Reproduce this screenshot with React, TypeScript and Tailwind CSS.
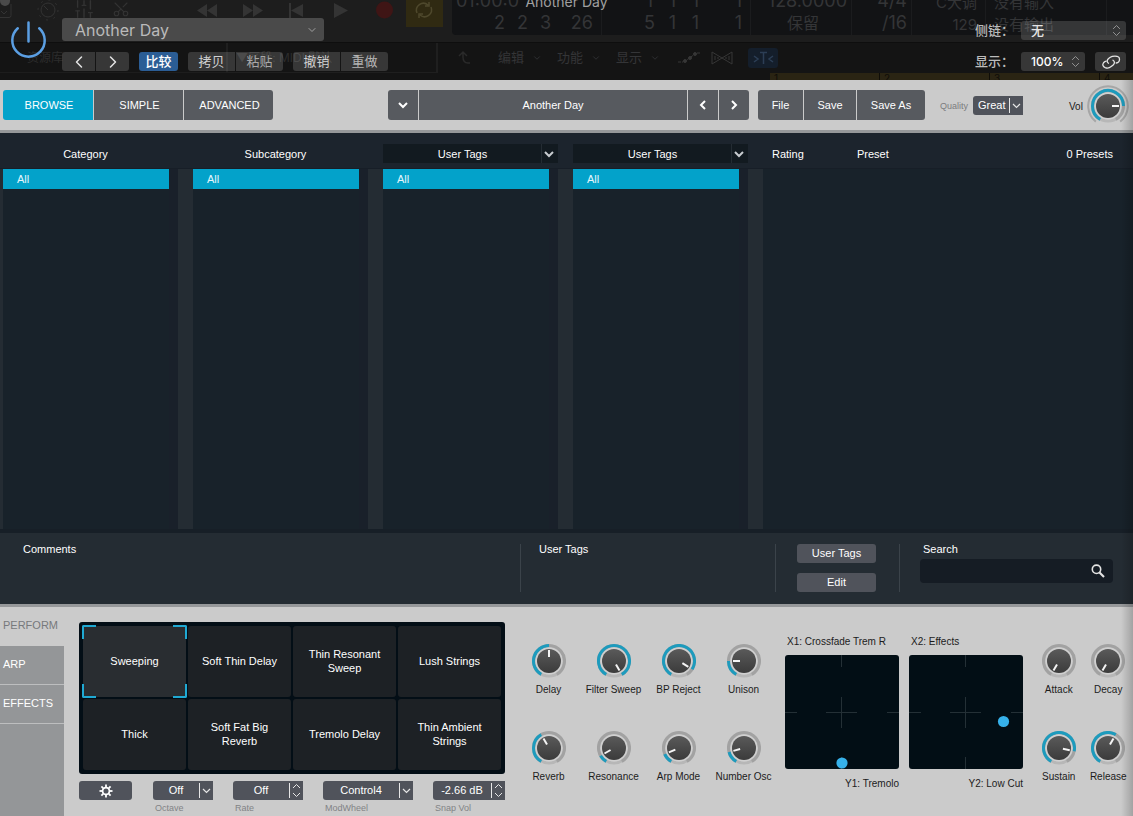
import { useId, useState } from "react";
import type { ReactNode } from "react";
import { ChevronDown, ChevronLeft, ChevronRight, ChevronsUpDown, Scissors, SlidersVertical } from "lucide-react";

type KnobProps = { label: string; angle: number };

const views = [
  { name: "BROWSE", width: "w-[90px]" },
  { name: "SIMPLE", width: "w-[89px]" },
  { name: "ADVANCED", width: "w-[89px]" },
];

const snapshots = [
  "Sweeping",
  "Soft Thin Delay",
  "Thin Resonant Sweep",
  "Lush Strings",
  "Thick",
  "Soft Fat Big Reverb",
  "Tremolo Delay",
  "Thin Ambient Strings",
];

const macroKnobs: KnobProps[] = [
  { label: "Delay", angle: 0 },
  { label: "Filter Sweep", angle: 150 },
  { label: "BP Reject", angle: 122 },
  { label: "Unison", angle: -90 },
  { label: "Reverb", angle: -30 },
  { label: "Resonance", angle: -120 },
  { label: "Arp Mode", angle: -113 },
  { label: "Number Osc", angle: -105 },
];

const envelopeKnobs: KnobProps[] = [
  { label: "Attack", angle: -150 },
  { label: "Decay", angle: -150 },
  { label: "Sustain", angle: 102 },
  { label: "Release", angle: 30 },
];

// 0 degrees points up, positive is clockwise
const point = (angle: number, r: number) => {
  const a = ((angle - 90) * Math.PI) / 180;
  return [r * Math.cos(a), r * Math.sin(a)];
};

const arc = (from: number, to: number, r: number) => {
  const [x1, y1] = point(from, r);
  const [x2, y2] = point(to, r);
  return `M${x1} ${y1}A${r} ${r} 0 ${to - from > 180 ? 1 : 0} 1 ${x2} ${y2}`;
};

const Dial = ({ label, angle, large }: KnobProps & { large?: boolean }) => {
  const id = useId();
  const [x1, y1] = point(angle, 4);
  const [x2, y2] = point(angle, 11);
  return (
    <span className="relative block">
      <svg
        viewBox={large ? "-21 -21 42 42" : "-17 -17 34 34"}
        className={large ? "block size-[42px]" : "block size-[34px]"}
        fill="none"
      >
        <defs>
          <linearGradient id={id} x1="0" y1="0" x2="0" y2="1">
            <stop offset="0" stopColor="#5a5a5a" />
            <stop offset="1" stopColor="#3b3b3b" />
          </linearGradient>
        </defs>
        {large && <path d={arc(-142, 142, 19.8)} stroke="#a6a6a6" strokeWidth="2" />}
        <circle r="15" stroke="#b7b7b7" strokeWidth="3" />
        <path d={arc(-150, 150, 15.5)} stroke="#a2a2a2" strokeWidth="3" />
        {angle > -150 && <path d={arc(-150, angle, 15.5)} stroke="#1d9bbd" strokeWidth="3" />}
        <circle r="13.5" fill="#d0d0d0" />
        <circle r="12" fill={`url(#${id})`} />
        <path d={`M${x1} ${y1}L${x2} ${y2}`} stroke="#f4f4f4" strokeWidth="2" />
      </svg>
      <input
        type="range"
        aria-label={label}
        min={-150}
        max={150}
        defaultValue={angle}
        className="absolute inset-0 size-full cursor-pointer opacity-0"
      />
    </span>
  );
};

const Knob = ({ label, angle }: KnobProps) => (
  <div className="flex h-[87px] flex-col items-center gap-1">
    <Dial label={label} angle={angle} />
    <span className="text-[10px] leading-4 whitespace-nowrap text-[#1c1c1c]">{label}</span>
  </div>
);

const SmallSelect = ({ label, value, width, stepper }: { label: string; value: string; width: string; stepper?: boolean }) => (
  <label className={`flex flex-col ${width}`}>
    <span className="relative flex h-[19px] rounded-l-[3px] bg-[#50535b] text-white">
      <select className="w-full appearance-none pr-3.5 text-center text-[11px] outline-none">
        <option>{value}</option>
      </select>
      <FieldArrow stepper={stepper} />
    </span>
    <span className="pl-[2px] text-[9px] leading-4 text-[#828386]">{label}</span>
  </label>
);

const FieldArrow = ({ stepper }: { stepper?: boolean }) => (
  <svg
    viewBox="0 0 14 19"
    className="pointer-events-none absolute top-0 right-0 h-[19px] w-3.5"
    fill="none"
    stroke="#e6e6e6"
  >
    <path d="M.5 2v15" />
    {stepper ? <path d="M4 7l3.5-3.5L11 7M4 12l3.5 3.5L11 12" /> : <path d="M4 8l3.5 3.5L11 8" strokeWidth="1.2" />}
  </svg>
);

const XYPad = ({ x, y, cx, cy }: { x: string; y: string; cx: number; cy: number }) => (
  <div className="flex w-[114px] flex-col">
    <span className="pl-[2px] text-[10px] leading-4 whitespace-nowrap">{x}</span>
    <svg viewBox="0 0 114 114" className="mt-[5px] mb-[7px] size-[114px] rounded-[3px] bg-[#020e15]" role="img" aria-label={`${x}, ${y}`}>
      <path
        d="M56.5 0v12M56.5 42v31M56.5 102v12M0 57.5h12M41 57.5h31M102 57.5h12"
        stroke="#243036"
        fill="none"
      />
      <circle cx={cx} cy={cy} r="5.6" fill="#36b1ea" />
    </svg>
    <span className="text-right text-[10px] leading-4 whitespace-nowrap">{y}</span>
  </div>
);

const Readout = ({ top, bottom, width }: { top: string; bottom: string; width: string }) => (
  <div className={`flex shrink-0 flex-col border-r border-[#1b1c1e] text-right ${width}`}>
    <span>{top}</span>
    <span>{bottom}</span>
  </div>
);

const Digits = ({ values }: { values: string[] }) => (
  <div className="grid grid-cols-[23px_23px_23px_1fr] text-center">
    {values.map((v, i) => (
      <span key={i} className={i % 4 === 3 ? "text-right" : ""}>{v}</span>
    ))}
  </div>
);

/* Host window showing faintly through the plugin header */
const HostBackdrop = () => (
  <div aria-hidden="true" className="absolute inset-0 flex flex-col overflow-hidden bg-[#191919] text-[#343537]">
    <div className="flex h-[43px] shrink-0 items-start border-b border-[#0e0e0e] bg-[#1d1d1d]">
      <svg viewBox="0 0 452 43" className="h-[43px] w-[452px] shrink-0" fill="none" stroke="#333">
        <circle cx="5" cy="1" r="5" fill="#4a4a4a" stroke="none" />
        <path d="M0 17.5h9q2 0 2-2V4M1 11l3 3 3-3" />
        <circle cx="48" cy="10" r="7" />
        <circle cx="48" cy="10" r="10" strokeDasharray="2 5.85" />
        <path d="M48 10l-4-4" />
        <rect x="406" width="37" height="27" fill="#302a12" stroke="none" />
        <path d="M417 13a7 7 0 0 1 11-8m1-3v4h-4M431 7a7 7 0 0 1-11 8m-1 3v-4h4" stroke="#4e482c" strokeWidth="1.5" />
        <g fill="#343434" stroke="none">
          <path d="M207 4v13l-10-6.500zM217 4v13l-10-6.500zM243 4v13l10-6.500zM253 4v13l10-6.500zM303 4v13l-12-6.500zM289 3h2v15h-2zM334 3v15l14-7.500z" />
        </g>
        <circle cx="384.500" cy="10" r="8.500" fill="#3f1515" stroke="none" />
        <SlidersVertical x="73" y="-2" width="22" height="22" strokeWidth="1.5" color="#333" />
        <g transform="rotate(-90 121 9)">
          <Scissors x="112" y="0" width="18" height="18" strokeWidth="1.5" color="#333" />
        </g>
      </svg>
      <div className="flex h-[35px] min-w-0 flex-1 overflow-hidden rounded-bl bg-[#121315] text-lg leading-[22px] whitespace-nowrap">
        <div className="-mt-[10px] flex">
          <div className="w-[150px] shrink-0 border-r border-[#1b1c1e] pr-2 pl-1">
            <div>01:00:0</div>
            <div className="pl-8"><Digits values={["2", "2", "3", "26"]} /></div>
          </div>
          <div className="w-[149px] shrink-0 border-r border-[#1b1c1e] pr-2 pl-9">
            <Digits values={["1", "1", "1", "1", "5", "1", "1", "1"]} />
          </div>
          <div className="w-[101px] shrink-0 border-r border-[#1b1c1e] pr-1 text-right">
            <div>128.0000</div>
            <div className="pr-7 text-base leading-[22px]">保留</div>
          </div>
          <Readout top="4/4" bottom="/16" width="w-[60px] pr-1" />
        </div>
        <div className="-mt-[8px] flex text-[15px]">
          <Readout top="C大调" bottom="129" width="w-[74px] pr-2" />
          <Readout top="没有输入" bottom="没有输出" width="w-[121px] pr-[52px]" />
        </div>
      </div>
    </div>
    <div className="flex flex-1 items-start bg-[#141414]">
      <div className="flex h-[30px] w-[226px] items-center border-b border-[#1d1d1d] pl-[27px] text-xs text-[#2c2c2c]">资源库</div>
      <div className="flex h-[30px] w-[212px] items-center border-r-2 border-b border-l-2 border-[#1f1f1f] pl-2 text-xs text-[#2c2c2c]">
        ▼区段: MIDI 默认
      </div>
      <div className="flex flex-1 flex-col">
        <div className="flex h-[30px] items-center text-[13px]">
          <svg viewBox="0 0 60 20" className="h-5 w-[60px]" fill="none" stroke="#2a2a2a" strokeWidth="1.500">
            <path d="M32 15h-2q-5 0-5-6V4m-4 4l4-4 4 4" />
          </svg>
          {["编辑", "功能", "显示"].map((m) => (
            <span key={m} className="flex w-[59px] items-center gap-2 pr-2">
              {m}
              <ChevronDown className="size-2.5 shrink-0" />
            </span>
          ))}
          <svg viewBox="0 0 105 22" className="h-[22px] w-[105px]" fill="none" stroke="#363636">
            <path d="M3 15h5M22 6h4M9 15L20 7" strokeDasharray="3 1" />
            <circle cx="10" cy="14" r="1.500" fill="#363636" />
            <circle cx="15" cy="11" r="1.500" fill="#363636" />
            <circle cx="20" cy="7" r="1.500" fill="#363636" />
            <path d="M37 5l10 6 10-6v12l-10-6-10 6zM40 9v4M54 9v4M43 10v2M51 10v2" />
            <rect x="73" y="1" width="30" height="20" rx="3" fill="#141e2b" stroke="none" />
            <path d="M79 9l4 3-4 3M98 9l-4 3 4 3M85 5.500h7M88.500 5v12" stroke="#2c3e55" strokeWidth="1.500" />
          </svg>
        </div>
        <div className="ml-auto grid h-[7px] w-[363px] grid-cols-[109px_110px_110px_34px] bg-[#2a2413] text-[10px] leading-[10px] text-[#0f0d08]">
          <span className="pl-1">1</span>
          <span className="border-l border-[#0f0d08] pl-1">2</span>
          <span className="border-l border-[#0f0d08] pl-1">3</span>
          <span className="border-l border-[#0f0d08] pl-1">4</span>
        </div>
      </div>
    </div>
    <span className="absolute inset-x-0 -top-2 text-center text-sm leading-5 text-[#a0a0a0]">Another Day</span>
  </div>
);

const hostButton = "flex h-[19px] items-center justify-center bg-white/15";

const PluginHeader = () => (
  <header className="relative h-20 overflow-hidden font-['Inter','Noto_Sans_CJK_SC',sans-serif] text-[13px] text-[#e4e4e4]">
    <HostBackdrop />
    <div className="relative flex items-start pr-[7px]">
      <button aria-label="Power" className="mt-5 ml-[10px] size-[38px] shrink-0">
        <svg viewBox="0 0 38 38" className="size-[38px]" fill="none" stroke="#5b9fe3" strokeWidth="2.500" strokeLinecap="round">
          <path d="M7.800 8.300a16.200 16.200 0 1 0 21.400 0M18.500 2.500v19" />
        </svg>
      </button>
      <div className="ml-3.5 flex flex-col gap-[11px] pt-[18px]">
        <div className="relative flex h-[23px] w-[262px] rounded-[3px] bg-white/20">
          <select aria-label="Setting" className="w-full appearance-none pl-[13px] text-base text-[#bababa] outline-none">
            <option>Another Day</option>
          </select>
          <ChevronDown className="pointer-events-none absolute top-1.5 right-1.5 size-3 text-[#a0a0a0]" />
        </div>
        <div className="flex gap-2.5">
          <div className="flex gap-px">
            <button aria-label="Previous setting" className={`${hostButton} w-[33px] rounded-l-[3px]`}>
              <ChevronLeft className="size-5" strokeWidth={1.8} />
            </button>
            <button aria-label="Next setting" className={`${hostButton} w-[33px] rounded-r-[3px]`}>
              <ChevronRight className="size-5" strokeWidth={1.8} />
            </button>
          </div>
          <button className="h-[19px] w-[39px] rounded-[3px] bg-[#2b5d95] leading-[19px] font-medium text-white">比较</button>
          <div className="flex gap-px">
            <button className={`${hostButton} w-[47px] rounded-l-[3px] text-[#d0d0d0]`}>拷贝</button>
            <button className={`${hostButton} w-[47px] rounded-r-[3px] text-[#a8a8a8]`}>粘贴</button>
          </div>
          <div className="flex gap-px">
            <button className={`${hostButton} w-[47px] rounded-l-[3px] text-[#d0d0d0]`}>撤销</button>
            <button className={`${hostButton} w-[47px] rounded-r-[3px] text-[#b4b4b4]`}>重做</button>
          </div>
        </div>
      </div>
      <div className="ml-auto flex flex-col gap-3 pt-[21px]">
        <label className="flex items-center">
          <span className="w-[46px] leading-[19px] font-medium whitespace-nowrap text-[#bcbcbc]">侧链：</span>
          <span className="relative flex h-[19px] w-[105px] rounded-[3px] bg-white/15">
            <select className="w-full appearance-none pl-2.5 font-medium outline-none">
              <option>无</option>
            </select>
            <ChevronsUpDown className="pointer-events-none absolute top-0.5 right-0.5 size-[15px] text-[#999]" strokeWidth={1.5} />
          </span>
        </label>
        <div className="flex items-center">
          <label className="flex items-center">
            <span className="w-[46px] leading-[19px] font-medium whitespace-nowrap text-[#bcbcbc]">显示：</span>
            <span className="relative flex h-[19px] w-16 rounded-[3px] bg-white/15">
              <select className="w-full appearance-none pl-2.5 text-xs font-medium text-white outline-none">
                <option>100%</option>
              </select>
              <ChevronsUpDown className="pointer-events-none absolute top-0.5 right-0.5 size-[15px] text-[#999]" strokeWidth={1.5} />
            </span>
          </label>
          <button aria-label="Link" className={`${hostButton} ml-2.5 w-[31px] rounded-[3px]`}>
            <svg viewBox="0 0 22 16" className="h-4 w-[22px]" fill="none" stroke="#e4e4e4" strokeWidth="1.300" strokeLinecap="round">
              <path d="M8.500 9.200C6.500 8 7 5.800 8.600 4.500l1.700-1.200C11.700 2.300 13 2.200 15 2.200c2.600 0 4.500 1 4.500 3s-1.500 3.600-3.300 3.800" />
              <path d="M13 6.200c2 1.400 1.800 3.300.2 4.700l-2 1.700c-1.700 1.400-4 1.800-6 1-2.200-1-3.200-3-1.700-4.800.8-.9 1.600-1.500 2.600-1.600" />
            </svg>
          </button>
        </div>
      </div>
    </div>
  </header>
);

const barButton = "flex h-[30px] items-center justify-center bg-[#575a5f] text-white";

const Bold = ({ d }: { d: string }) => (
  <svg viewBox="0 0 12 12" className="size-3" fill="none" stroke="currentColor" strokeWidth="2">
    <path d={d} />
  </svg>
);

const Toolbar = () => {
  const [view, setView] = useState("BROWSE");
  return (
    <div className="flex h-[53px] items-start border-b-3 border-[#96989a] bg-[#cbcbcb] pt-2.5 pr-1 pl-[3px] text-[11px]">
      <nav className="flex gap-px overflow-hidden rounded-[3px]">
        {views.map((v) => (
          <button
            key={v.name}
            onClick={() => setView(v.name)}
            className={`h-[30px] pl-0.5 text-white ${v.width} ${view === v.name ? "bg-[#03a2ca]" : "bg-[#575a5f]"}`}
          >
            {v.name}
          </button>
        ))}
      </nav>
      <div className="ml-[115px] flex flex-1 gap-px overflow-hidden rounded-[3px]">
        <button aria-label="Preset menu" className={`${barButton} w-[30px]`}><Bold d="M2 4l4 4 4-4" /></button>
        <button className={`${barButton} flex-1`}>Another Day</button>
        <button aria-label="Previous preset" className={`${barButton} w-[30px]`}><Bold d="M8 2L4 6l4 4" /></button>
        <button aria-label="Next preset" className={`${barButton} w-[30px]`}><Bold d="M4 2l4 4-4 4" /></button>
      </div>
      <div className="ml-[9px] flex gap-px overflow-hidden rounded-[3px]">
        <button className={`${barButton} w-[45px]`}>File</button>
        <button className={`${barButton} w-[52px]`}>Save</button>
        <button className={`${barButton} w-[68px]`}>Save As</button>
      </div>
      <label className="ml-[15px] flex h-[31px] items-center">
        <span className="w-[33px] pt-0.5 text-[9px] text-[#7b7c7e]">Quality</span>
        <span className="relative flex h-[19px] w-[50px] rounded-l-[3px] bg-[#50535b] text-white">
          <select className="w-full appearance-none pl-[5px] outline-none">
            <option>Great</option>
          </select>
          <FieldArrow />
        </span>
      </label>
      <div className="-mt-[5px] ml-[46px] flex items-center gap-1">
        <span className="w-3.5 text-[10px] text-[#1c1c1c]">Vol</span>
        <Dial label="Vol" angle={90} large />
      </div>
    </div>
  );
};

const HeaderCell = ({ title, menu }: { title: string; menu?: boolean }) =>
  menu ? (
    <div className="relative h-[19px] w-[175px] bg-[#121a20]">
      <select aria-label={title} className="h-[19px] w-full appearance-none pt-0.5 pr-4 text-center outline-none">
        <option>{title}</option>
      </select>
      <span className="pointer-events-none absolute inset-y-0 right-0 flex w-[17px] items-center border-l border-[#242c33] pl-px text-[#c8ccd0]">
        <Bold d="M2 4l4 4 4-4" />
      </span>
    </div>
  ) : (
    <h2 className="w-[175px] pr-2.5 text-center leading-[21px]">{title}</h2>
  );

const Browser = () => (
  <main className="flex flex-1 flex-col bg-[#1c242d] text-[11px] text-white">
    <div className="flex h-[35px] items-start gap-[15px] pt-[11px] pr-5 pl-[3px]">
      <HeaderCell title="Category" />
      <HeaderCell title="Subcategory" />
      <HeaderCell title="User Tags" menu />
      <HeaderCell title="User Tags" menu />
      <div className="flex flex-1 pl-[9px] leading-[21px]">
        <span className="w-[85px]">Rating</span>
        <span>Preset</span>
        <span className="ml-auto">0 Presets</span>
      </div>
    </div>
    <div className="flex flex-1 gap-[15px] border-t border-[#171e27] bg-[#242c33] pl-[3px]">
      {["Category", "Subcategory", "User Tags 1", "User Tags 2"].map((name) => (
        <ul key={name} aria-label={name} className="w-[175px] border-r-9 border-[#19202a] bg-[#18222a]">
          <li>
            <button className="block h-5 w-full bg-[#03a2ca] pl-3.5 text-left text-[#e6f6fb]">All</button>
          </li>
        </ul>
      ))}
      <ul aria-label="Presets" className="flex-1 bg-[#18222a]" />
    </div>
    <div className="h-1 bg-[#171f27]" />
  </main>
);

const InfoBar = () => (
  <section className="flex h-[74px] items-start border-b-3 border-[#96989a] bg-[#242c33] pt-[11px] text-[11px] leading-[11px] text-white">
    <div className="h-12 flex-1 pl-[23px]">Comments</div>
    <div className="h-12 w-[255px] border-l border-[#3b434a] pl-[18px]">User Tags</div>
    <div className="flex h-12 w-[124px] flex-col justify-between border-l border-[#3b434a] pl-[21px]">
      <button className="h-[19px] w-[79px] rounded-[3px] bg-[#50535b]">User Tags</button>
      <button className="h-[19px] w-[79px] rounded-[3px] bg-[#50535b]">Edit</button>
    </div>
    <label className="flex h-12 w-[234px] flex-col border-l border-[#3b434a] px-5">
      <span className="pb-1 pl-[3px]">Search</span>
      <span className="relative block">
        <input type="text" className="h-6 w-full rounded-sm bg-[#151c24] pr-8 pl-2 outline-none" />
        <svg viewBox="0 0 14 14" className="absolute top-[5px] right-2 size-3.5" fill="none" stroke="#e4e4e4">
          <circle cx="5.500" cy="5.300" r="4.200" strokeWidth="1.600" />
          <path d="M8.500 8.500l4.500 4.500" strokeWidth="2.100" />
        </svg>
      </span>
    </label>
  </section>
);

const Corners = (): ReactNode => (
  <span className="pointer-events-none absolute -inset-px">
    <span className="absolute top-0 left-0 size-3.5 rounded-tl-[2px] border-t-2 border-l-2 border-[#1fa9d3]" />
    <span className="absolute top-0 right-0 size-3.5 rounded-tr-[2px] border-t-2 border-r-2 border-[#1fa9d3]" />
    <span className="absolute bottom-0 left-0 size-3.5 rounded-bl-[2px] border-b-2 border-l-2 border-[#1fa9d3]" />
    <span className="absolute right-0 bottom-0 size-3.5 rounded-br-[2px] border-r-2 border-b-2 border-[#1fa9d3]" />
  </span>
);

const Perform = () => {
  const [active, setActive] = useState(0);
  return (
    <section className="flex h-[209px] bg-[#cbcbcb] text-[#1c1c1c]">
      <nav className="flex w-16 flex-col bg-[#949698] text-[11px] text-white">
        <button className="h-[39px] bg-[#cbcbcb] pb-0.5 pl-[3px] text-left text-[#77797c]">PERFORM</button>
        <button className="h-[39px] border-b border-[#bdbebf] pb-0.5 pl-[3px] text-left">ARP</button>
        <button className="h-[39px] border-b border-[#bdbebf] pb-0.5 pl-[3px] text-left">EFFECTS</button>
      </nav>

      {/* Snapshots */}
      <div className="ml-[15px] flex min-w-[426px] flex-1 flex-col pt-[15px]">
        <div className="grid grid-cols-4 grid-rows-[71px_71px] gap-0.5 rounded-[3px] bg-[#030e16] p-1">
          {snapshots.map((name, i) => (
            <button
              key={name}
              onClick={() => setActive(i)}
              className={`relative rounded-[3px] px-3 pb-px text-[11px] leading-[14px] text-white ${active === i ? "bg-[#292d31]" : "bg-[#1d2125]"}`}
            >
              {name}
              {active === i && <Corners />}
            </button>
          ))}
        </div>
        <div className="flex items-start pt-[7px]">
          <button aria-label="Settings" className="flex h-[19px] w-[53px] items-center justify-center rounded-[3px] bg-[#50535b]">
            <svg viewBox="-7 -7 14 14" className="size-3.5" fill="none" stroke="#fff">
              <circle r="3.400" strokeWidth="1.700" />
              {[0, 45, 90, 135, 180, 225, 270, 315].map((a) => (
                <path key={a} d="M0-3.800V-6.500" strokeWidth="1.800" transform={`rotate(${a})`} />
              ))}
            </svg>
          </button>
          <div className="flex flex-1 justify-between pl-[21px]">
            <SmallSelect label="Octave" value="Off" width="w-[60px]" />
            <SmallSelect label="Rate" value="Off" width="w-[70px]" stepper />
            <SmallSelect label="ModWheel" value="Control4" width="w-[90px]" />
            <label className="flex w-[72px] flex-col">
              <span className="relative flex h-[19px] rounded-l-[3px] bg-[#50535b] text-white">
                <input type="text" defaultValue="-2.66 dB" className="w-full pr-3.5 text-center text-[11px] outline-none" />
                <FieldArrow stepper />
              </span>
              <span className="pl-[2px] text-[9px] leading-4 text-[#828386]">Snap Vol</span>
            </label>
          </div>
        </div>
      </div>

      {/* Macro knobs */}
      <div className="ml-[11px] grid w-[260px] grid-cols-4 content-start pt-[37px]">
        {macroKnobs.map((k) => <Knob key={k.label} {...k} />)}
      </div>

      {/* XY pads */}
      <div className="ml-[9px] flex gap-2.5 pt-[27px]">
        <XYPad x="X1: Crossfade Trem R" y="Y1: Tremolo" cx={57} cy={108} />
        <XYPad x="X2: Effects" y="Y2: Low Cut" cx={94.5} cy={66.5} />
      </div>

      {/* Envelope */}
      <div className="ml-[11px] grid w-[99px] grid-cols-2 content-start pt-[37px]">
        {envelopeKnobs.map((k) => <Knob key={k.label} {...k} />)}
      </div>
    </section>
  );
};

const App = () => (
  <div className="flex min-h-screen flex-col font-['Liberation_Sans','Noto_Sans_CJK_SC',sans-serif]">
    <PluginHeader />
    <div className="relative flex flex-1 flex-col">
      <Toolbar />
      <Browser />
      <InfoBar />
      <Perform />
      <div className="pointer-events-none absolute inset-y-0 right-0 w-3 bg-linear-to-r from-transparent to-black/20" />
    </div>
  </div>
);

export default App;
